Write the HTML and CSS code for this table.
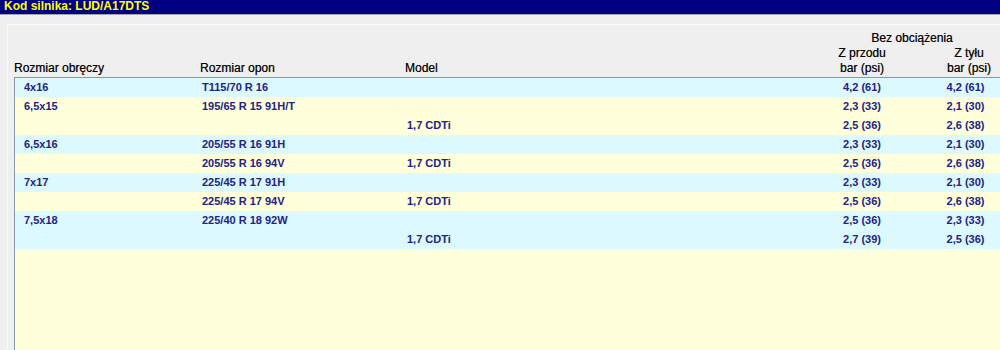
FILE: index.html
```html
<!DOCTYPE html>
<html lang="pl">
<head>
<meta charset="utf-8">
<title>Kod silnika: LUD/A17DTS</title>
<link rel="stylesheet" href="styles.css">
</head>
<body>
<div class="titlebar"><span class="title">Kod silnika: LUD/A17DTS</span></div>
<div class="panel">
  <div class="head">
    <div class="h-group">Bez obciążenia</div>
    <div class="h-cell h-rim">Rozmiar obręczy</div>
    <div class="h-cell h-tyre">Rozmiar opon</div>
    <div class="h-cell h-model">Model</div>
    <div class="h-cell h-front">Z przodu<br>bar (psi)</div>
    <div class="h-cell h-rear">Z tyłu<br>bar (psi)</div>
  </div>
  <div class="rows">
    <div class="row cyan"><span class="c-rim">4x16</span><span class="c-tyre">T115/70 R 16</span><span class="c-model"></span><span class="c-front">4,2 (61)</span><span class="c-rear">4,2 (61)</span></div>
    <div class="row yellow"><span class="c-rim">6,5x15</span><span class="c-tyre">195/65 R 15 91H/T</span><span class="c-model"></span><span class="c-front">2,3 (33)</span><span class="c-rear">2,1 (30)</span></div>
    <div class="row yellow"><span class="c-rim"></span><span class="c-tyre"></span><span class="c-model">1,7 CDTi</span><span class="c-front">2,5 (36)</span><span class="c-rear">2,6 (38)</span></div>
    <div class="row cyan"><span class="c-rim">6,5x16</span><span class="c-tyre">205/55 R 16 91H</span><span class="c-model"></span><span class="c-front">2,3 (33)</span><span class="c-rear">2,1 (30)</span></div>
    <div class="row yellow"><span class="c-rim"></span><span class="c-tyre">205/55 R 16 94V</span><span class="c-model">1,7 CDTi</span><span class="c-front">2,5 (36)</span><span class="c-rear">2,6 (38)</span></div>
    <div class="row cyan"><span class="c-rim">7x17</span><span class="c-tyre">225/45 R 17 91H</span><span class="c-model"></span><span class="c-front">2,3 (33)</span><span class="c-rear">2,1 (30)</span></div>
    <div class="row yellow"><span class="c-rim"></span><span class="c-tyre">225/45 R 17 94V</span><span class="c-model">1,7 CDTi</span><span class="c-front">2,5 (36)</span><span class="c-rear">2,6 (38)</span></div>
    <div class="row cyan"><span class="c-rim">7,5x18</span><span class="c-tyre">225/40 R 18 92W</span><span class="c-model"></span><span class="c-front">2,5 (36)</span><span class="c-rear">2,3 (33)</span></div>
    <div class="row cyan"><span class="c-rim"></span><span class="c-tyre"></span><span class="c-model">1,7 CDTi</span><span class="c-front">2,7 (39)</span><span class="c-rear">2,5 (36)</span></div>
  </div>
</div>
</body>
</html>
```
FILE: styles.css
```css
html, body {
  margin: 0;
  padding: 0;
  height: 100%;
}
body {
  display: flex;
  flex-direction: column;
  background: #f0f0f0;
  font-family: "Liberation Sans", Arial, sans-serif;
  overflow: hidden;
}
.titlebar {
  height: 14px;
  flex: 0 0 14px;
  background: #000080;
  border-bottom: 1px solid #a4a4ac;
  padding-left: 4px;
  overflow: hidden;
}
.title {
  display: block;
  color: #ffff00;
  font-weight: bold;
  font-size: 12px;
  line-height: 12px;
  white-space: nowrap;
}
.panel {
  flex: 1;
  display: flex;
  flex-direction: column;
  margin-top: 9px;
  margin-left: 7px;
  border-top: 1px solid #fbfbfb;
  border-left: 1px solid #fbfbfb;
  background: #efefef;
  min-height: 0;
}
.head {
  display: grid;
  grid-template-columns: 186px 205px 1fr 107px 62px;
  padding: 6px 0 1px 6px;
  font-size: 12px;
  line-height: 15px;
  color: #000;
  text-shadow: 0.35px 0 0 rgba(0, 0, 0, 0.55);
}
.h-group {
  grid-column: 4 / 6;
  grid-row: 1;
  text-align: center;
  padding-right: 7px;
}
.h-cell {
  grid-row: 2;
  align-self: end;
  white-space: nowrap;
}
.h-rim { grid-column: 1; }
.h-tyre { grid-column: 2; }
.h-model { grid-column: 3; }
.h-front {
  grid-column: 4;
  text-align: center;
  padding-right: 45px;
}
.h-rear {
  grid-column: 5;
  text-align: center;
}
.rows {
  flex: 1;
  margin-left: 6px;
  background: #ffffdc;
  border-top: 1px solid #8e98a4;
  border-left: 1px solid #8e98a4;
}
.row {
  display: grid;
  grid-template-columns: 185px 205px 1fr 107px 62px;
  height: 19px;
  line-height: 19px;
  font-size: 11px;
  font-weight: bold;
  color: #222288;
  white-space: nowrap;
}
.cyan { background: #dbf9ff; }
.yellow { background: #ffffdc; }
.c-rim { padding-left: 9px; }
.c-tyre { padding-left: 2px; }
.c-model { padding-left: 2px; }
.c-front {
  text-align: center;
  padding-right: 45px;
}
.c-rear {
  text-align: center;
  padding-right: 7px;
}
```
